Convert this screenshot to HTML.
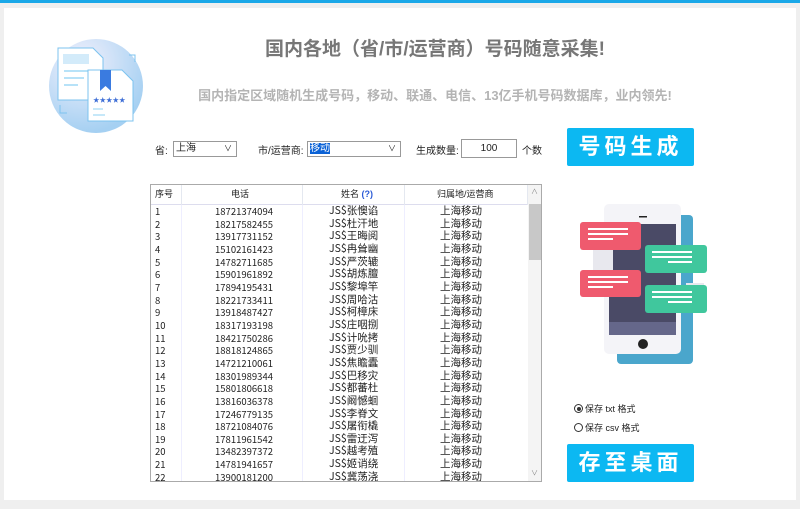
<!DOCTYPE html>
<html><head><meta charset="utf-8"><style>
*{margin:0;padding:0;box-sizing:border-box}
body{width:800px;height:509px;background:#efefef;position:relative;overflow:hidden;font-family:"Liberation Sans","Noto Sans CJK SC",sans-serif;font-size:9px;color:#222}
.a{position:absolute}
#panel{left:4px;top:8px;width:792px;height:492px;background:#fff}
.btn{background:#0cb8f2;color:#fff;font-size:22px;font-weight:bold;letter-spacing:4px;text-align:center;border-radius:2px}
.sel{border:1px solid #999;height:16px;background:#fff;line-height:14px}
.rows div.r{height:12.67px;position:relative}
.r span{position:absolute;top:0;line-height:12.67px;font-size:9.5px;font-family:"Noto Sans CJK SC",sans-serif;white-space:nowrap}
.r span.n{font-size:10.5px}
</style></head><body>
<div class="a" style="left:0;top:0;width:800px;height:3px;background:#1aa8e8"></div>
<div class="a" id="panel"></div>
<svg class="a" style="left:45px;top:35px" width="105" height="105" viewBox="0 0 105 105">
<defs><radialGradient id="g" cx="35%" cy="25%" r="75%"><stop offset="0" stop-color="#f2f0fc"/><stop offset="1" stop-color="#a5d0f2"/></radialGradient></defs>
<circle cx="51" cy="51" r="47" fill="url(#g)"/>
<path d="M13 13h35l10 10v42h-45z" fill="#fff" stroke="#7cc3ef"/>
<rect x="18" y="19" width="26" height="10" fill="#d3ebfa"/>
<path d="M19 36h24M19 43h20M19 50h14" stroke="#8cd0f3" stroke-width="1.2"/>
<path d="M43 35h34l11 11v40h-45z" fill="#fff" stroke="#7cc3ef"/>
<path d="M55 35h11v21l-5.5-5-5.5 5z" fill="#3a7be0"/>
<text x="48" y="67" font-size="6.5" fill="#3c6dd6">★★★★★</text>
<path d="M48 74h10M48 80h12" stroke="#8cd0f3"/>
<path d="M15 70v8h7M84 20h6v7" stroke="#7cc3ef" fill="none"/>
</svg>
<div class="a" style="left:150px;top:34px;width:570px;text-align:center;font-size:19px;font-weight:bold;color:#777;white-space:nowrap">国内各地（省/市/运营商）号码随意采集!</div>
<div class="a" style="left:150px;top:85px;width:570px;text-align:center;font-size:13px;font-weight:bold;color:#b4b4b4;white-space:nowrap">国内指定区域随机生成号码，移动、联通、电信、13亿手机号码数据库，业内领先!</div>
<div class="a" style="left:155px;top:142px;font-size:10px">省:</div>
<div class="a sel" style="left:173px;top:141px;width:64px;font-size:10px;padding-left:2px">上海<span style="position:absolute;right:4px;font-size:8px">∨</span></div>
<div class="a" style="left:258px;top:142px;font-size:10px">市/运营商:</div>
<div class="a sel" style="left:307px;top:141px;width:94px;font-size:10px;padding-left:2px"><span style="background:#0b62d6;color:#fff">移动</span><span style="position:absolute;right:4px;font-size:8px">∨</span></div>
<div class="a" style="left:416px;top:142px;font-size:10px">生成数量:</div>
<div class="a sel" style="left:461px;top:139px;width:56px;height:19px;font-size:10px;text-align:center;line-height:17px">100</div>
<div class="a" style="left:522px;top:142px;font-size:10px">个数</div>
<div class="a btn" style="left:567px;top:128px;width:127px;height:38px;line-height:38px">号码生成</div>
<div class="a" style="left:150px;top:184px;width:392px;height:298px;border:1px solid #aaa;background:#fff;overflow:hidden">
<div style="height:20px;border-bottom:1px solid #dde;position:relative;font-size:9px;line-height:19px">
<span class="a" style="left:4px">序号</span><span class="a" style="left:80px">电话</span><span class="a" style="left:190px">姓名 <b style="color:#2a5ad6">(?)</b></span><span class="a" style="left:286px">归属地/运营商</span>
<div class="a" style="left:30px;top:0;height:20px;border-left:1px solid #e4e8f0"></div>
<div class="a" style="left:151px;top:0;height:20px;border-left:1px solid #e4e8f0"></div>
<div class="a" style="left:253px;top:0;height:20px;border-left:1px solid #e4e8f0"></div>
<div class="a" style="left:376px;top:0;height:20px;border-left:1px solid #e4e8f0"></div>
</div>
<div class="a" style="left:30px;top:20px;height:280px;border-left:1px solid #eef"></div>
<div class="a" style="left:151px;top:20px;height:280px;border-left:1px solid #eef"></div>
<div class="a" style="left:253px;top:20px;height:280px;border-left:1px solid #eef"></div>
<div class="rows" id="rows"></div>
<div class="a" style="left:377px;top:0;width:14px;height:297px;background:#f4f4f4"></div>
<div class="a" style="left:380px;top:2px;font-size:7px;color:#888">∧</div>
<div class="a" style="left:378px;top:19px;width:12px;height:56px;background:#c8c8c8"></div>
<div class="a" style="left:380px;top:283px;font-size:7px;color:#888">∨</div>
</div>
<svg class="a" style="left:576px;top:200px" width="135" height="170" viewBox="0 0 135 170">
<rect x="41" y="15" width="76" height="149" rx="4" fill="#4aa6cc"/>
<rect x="28" y="4" width="77" height="150" rx="5" fill="#f4f4f8"/>
<rect x="33" y="24" width="67" height="111" fill="#4a4a66"/>
<rect x="33" y="122" width="67" height="13" fill="#65678a"/>
<circle cx="67" cy="144" r="5" fill="#222"/>
<rect x="63" y="16" width="8" height="1.5" fill="#222"/>
<rect x="17" y="49" width="20" height="30" fill="#e8e8ee"/><rect x="110" y="83" width="18" height="30" fill="#e8e8ee"/>
<rect x="4" y="22" width="61" height="28" rx="3" fill="#ef5a6e"/>
<path d="M12 29h40M12 34h40M12 39h25" stroke="#fff" stroke-width="2"/>
<rect x="4" y="70" width="61" height="27" rx="3" fill="#ef5a6e"/>
<path d="M12 77h40M12 82h40M12 87h25" stroke="#fff" stroke-width="2"/>
<rect x="69" y="45" width="62" height="28" rx="3" fill="#40c79d"/>
<path d="M76 52h40M76 57h40M92 62h24" stroke="#fff" stroke-width="2"/>
<rect x="69" y="85" width="62" height="28" rx="3" fill="#40c79d"/>
<path d="M76 92h40M76 97h40M92 102h24" stroke="#fff" stroke-width="2"/>
</svg>
<div class="a" style="left:574px;top:402px;font-size:9px;display:flex;align-items:center"><span style="width:9px;height:9px;border:1px solid #333;border-radius:50%;display:inline-block;position:relative;margin-right:2px"><span style="position:absolute;left:1.5px;top:1.5px;width:4px;height:4px;border-radius:50%;background:#333"></span></span>保存 txt 格式</div>
<div class="a" style="left:574px;top:421px;font-size:9px;display:flex;align-items:center"><span style="width:9px;height:9px;border:1px solid #333;border-radius:50%;display:inline-block;margin-right:2px"></span>保存 csv 格式</div>
<div class="a btn" style="left:567px;top:444px;width:127px;height:38px;line-height:38px">存至桌面</div>
<script>
var d=[["18721374094","张懊谄"],["18217582455","杜汗地"],["13917731152","王晦阅"],["15102161423","冉耸幽"],["14782711685","严茨辘"],["15901961892","胡炼膻"],["17894195431","黎埠竿"],["18221733411","周哈沽"],["13918487427","柯樟床"],["18317193198","庄咽捌"],["18421750286","计吮拷"],["18818124865","贾少驯"],["14721210061","焦瞻蠹"],["18301989344","巴移灾"],["15801806618","都蕃杜"],["13816036378","阚憾蛔"],["17246779135","李脊文"],["18721084076","屠衔橇"],["17811961542","雷迂泻"],["13482397372","越考殖"],["14781941657","姬诮绕"],["13900181200","冀荡浇"]];
var h="";d.forEach(function(x,i){h+='<div class="r"><span style="left:4px">'+(i+1)+'</span><span style="left:64px">'+x[0]+'</span><span class="n" style="left:178px">JS$'+x[1]+'</span><span class="n" style="left:289px">上海移动</span></div>';});
document.getElementById("rows").innerHTML=h;
</script>
</body></html>
